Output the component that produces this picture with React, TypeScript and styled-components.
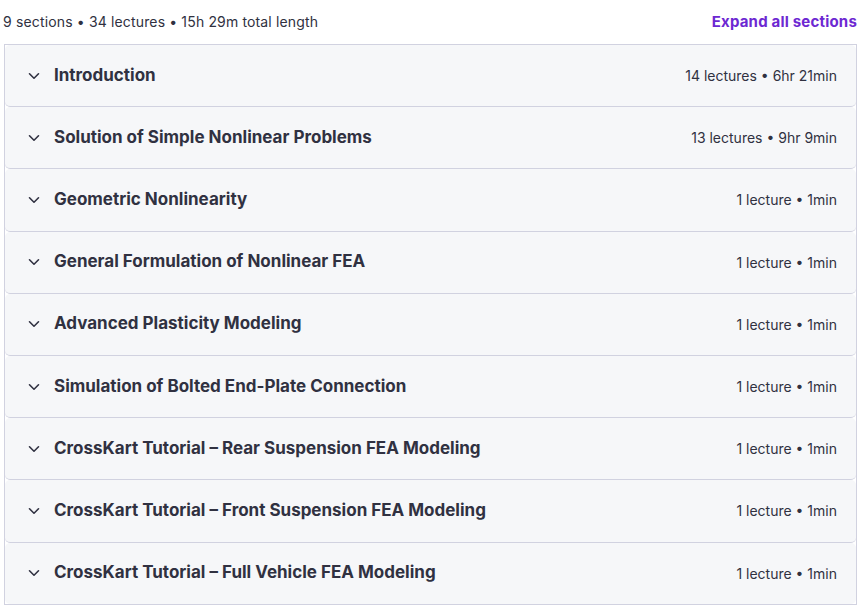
import styled, { createGlobalStyle } from 'styled-components'

const GlobalStyle = createGlobalStyle`
	body {
		margin: 0;
		background: #ffffff;
		font-family: Inter, "Noto Sans", "Liberation Sans", sans-serif;
		color: #303141;
	}
`

const sections = [
	{ title: 'Introduction', meta: '14 lectures • 6hr 21min' },
	{ title: 'Solution of Simple Nonlinear Problems', meta: '13 lectures • 9hr 9min' },
	{ title: 'Geometric Nonlinearity', meta: '1 lecture • 1min' },
	{ title: 'General Formulation of Nonlinear FEA', meta: '1 lecture • 1min' },
	{ title: 'Advanced Plasticity Modeling', meta: '1 lecture • 1min' },
	{ title: 'Simulation of Bolted End-Plate Connection', meta: '1 lecture • 1min' },
	{ title: 'CrossKart Tutorial – Rear Suspension FEA Modeling', meta: '1 lecture • 1min' },
	{ title: 'CrossKart Tutorial – Front Suspension FEA Modeling', meta: '1 lecture • 1min' },
	{ title: 'CrossKart Tutorial – Full Vehicle FEA Modeling', meta: '1 lecture • 1min' },
]

function Chevron() {
	return (
		<svg width="12" height="12" viewBox="0 0 12 12" fill="none">
			<path
				d="M1.5 3.8 L6 8.2 L10.5 3.8"
				stroke="#303141"
				strokeWidth="1.6"
				strokeLinecap="round"
				strokeLinejoin="round"
			/>
		</svg>
	)
}

function App() {
	return (
		<>
			<GlobalStyle />
			<Page>
				<Header>
					<Summary>9 sections • 34 lectures • 15h 29m total length</Summary>
					<ExpandButton>Expand all sections</ExpandButton>
				</Header>
				<Accordion>
					{sections.map((s) => (
						<Section key={s.title}>
							<Chevron />
							<Title>{s.title}</Title>
							<Meta>{s.meta}</Meta>
						</Section>
					))}
				</Accordion>
			</Page>
		</>
	)
}

const Page = styled.div`
	width: 853px;
	padding-left: 4px;
`

const Header = styled.div`
	height: 44px;
	display: flex;
	align-items: center;
	justify-content: space-between;
	padding-bottom: 2px;
	box-sizing: border-box;
	margin-left: -1px;
`

const Summary = styled.span`
	font-size: 14px;
	color: #303141;
	letter-spacing: 0.15px;
`

const ExpandButton = styled.button`
	border: none;
	background: none;
	padding: 0;
	font-family: inherit;
	font-size: 15px;
	font-weight: 700;
	letter-spacing: 0.2px;
	color: #6d28d2;
	cursor: pointer;
`

const Accordion = styled.div`
	border: 1px solid #d1d2e0;
	background: #ffffff;
`

const Section = styled.div`
	height: 61.2px;
	display: flex;
	align-items: center;
	padding: 0 19px 0 23px;
	background: #f6f7f9;
	border-radius: 5px;
	border-bottom: 1px solid #d1d2e0;

	&:last-child {
		border-bottom: none;
	}

	svg {
		flex-shrink: 0;
		margin-right: 14px;
	}
`

const Title = styled.span`
	flex: 1;
	font-size: 17px;
	font-weight: 700;
	color: #303141;
	padding-bottom: 2px;
`

const Meta = styled.span`
	font-size: 14px;
	color: #303141;
`

export default App
